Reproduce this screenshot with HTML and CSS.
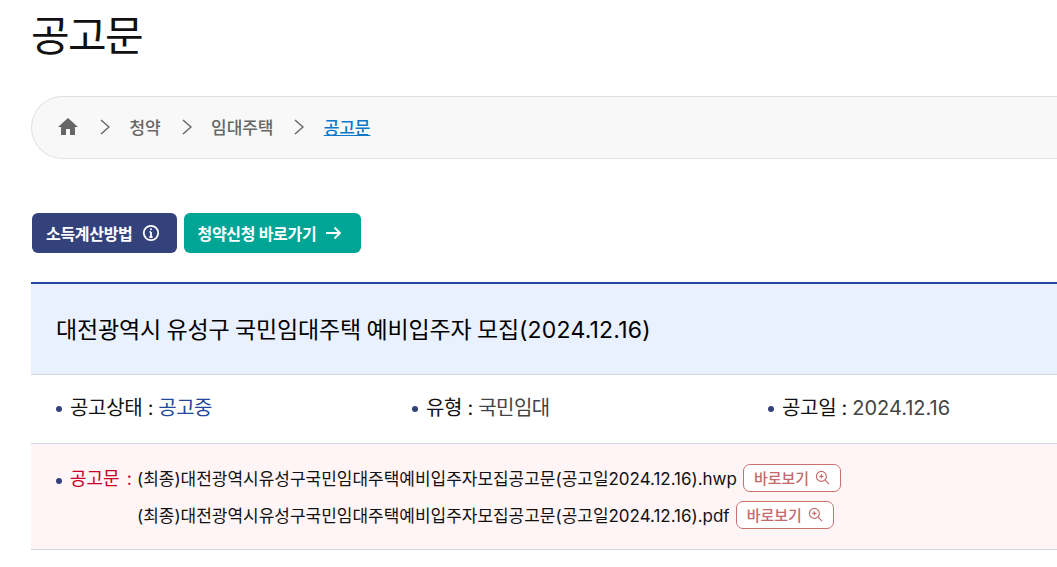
FILE: index.html
```html
<!DOCTYPE html>
<html lang="ko">
<head>
    <meta charset="UTF-8">
    <meta name="viewport" content="width=device-width, initial-scale=1.0">
    <title>공고문</title>
    <link rel="stylesheet" href="styles.css">
</head>
<body>
    <h1 class="page-title">공고문</h1>

    <nav class="breadcrumb">
        <svg class="home-icon" viewBox="0 0 24 24" width="24" height="24"><path d="M10 20v-6h4v6h5v-8h3L12 3 2 12h3v8z"/></svg>
        <svg class="crumb-sep" viewBox="0 0 10 16" width="10" height="16"><path d="M1 1l8 7-8 7"/></svg>
        <span class="crumb">청약</span>
        <svg class="crumb-sep" viewBox="0 0 10 16" width="10" height="16"><path d="M1 1l8 7-8 7"/></svg>
        <span class="crumb">임대주택</span>
        <svg class="crumb-sep" viewBox="0 0 10 16" width="10" height="16"><path d="M1 1l8 7-8 7"/></svg>
        <a class="crumb current" href="#">공고문</a>
    </nav>

    <div class="actions">
        <a class="btn btn-navy" href="#">소득계산방법
            <svg viewBox="0 0 18 18" width="18" height="18"><circle cx="9" cy="9" r="7.2"/><path d="M9 8v5M7.4 13h3.2M7.6 8H9"/><circle class="dot" cx="9" cy="5.3" r="1"/></svg>
        </a>
        <a class="btn btn-teal" href="#">청약신청 바로가기
            <svg viewBox="0 0 18 18" width="18" height="18"><path d="M1 9h14.500M9.500 3.500L15 9l-5.500 5.500"/></svg>
        </a>
    </div>

    <section class="notice">
        <h2 class="notice-title"><span>대전광역시 유성구 국민임대주택 예비입주자 모집<span class="title-date">(2024.12.16)</span></span></h2>
        <ul class="info-row">
            <li class="info-item"><span class="label">공고상태 :</span> <span class="status">공고중</span></li>
            <li class="info-item"><span class="label">유형 :</span> 국민임대</li>
            <li class="info-item"><span class="label">공고일 :</span> <span class="date">2024.12.16</span></li>
        </ul>
        <div class="files">
            <span class="files-label">공고문 :</span>
            <div class="file-list">
                <div class="file">(최종)대전광역시유성구국민임대주택예비입주자모집공고문(공고일2024.12.16).hwp
                    <a class="view-btn" href="#">바로보기
                        <svg viewBox="0 0 16 16" width="15" height="15"><circle cx="6.800" cy="6.800" r="5.300"/><path d="M10.700 10.700L15 15M4.500 6.800h4.600M6.800 4.500v4.600"/></svg>
                    </a>
                </div>
                <div class="file">(최종)대전광역시유성구국민임대주택예비입주자모집공고문(공고일2024.12.16).pdf
                    <a class="view-btn" href="#">바로보기
                        <svg viewBox="0 0 16 16" width="15" height="15"><circle cx="6.800" cy="6.800" r="5.300"/><path d="M10.700 10.700L15 15M4.500 6.800h4.600M6.800 4.500v4.600"/></svg>
                    </a>
                </div>
            </div>
        </div>
    </section>
</body>
</html>
```

FILE: styles.css
```css
* {
    box-sizing: border-box;
}
html, body {
    overflow: hidden;
}
body {
    margin: 0;
    padding-left: 31px;
    height: 567px;
    background-color: #ffffff;
    color: #111111;
    font-family: Inter, 'Noto Sans CJK KR', sans-serif;
}
.page-title {
    margin: 8px 0 0;
    font-size: 42px;
    line-height: 56px;
    font-weight: 400;
    letter-spacing: -1.7px;
}
.breadcrumb {
    display: flex;
    align-items: center;
    height: 63px;
    margin-top: 32px;
    padding: 0 0 2px 24px;
    background-color: #f8f8f8;
    border: 1px solid #e0e0e0;
    border-right: none;
    border-radius: 32px 0 0 32px;
}
.home-icon {
    margin-right: -1px;
    fill: #666666;
}
.crumb-sep {
    margin: 0 19.5px 0 21px;
    fill: none;
    stroke: #666666;
    stroke-width: 1.5;
}
.crumb {
    font-size: 17px;
    font-weight: 500;
    letter-spacing: -0.1px;
    color: #666666;
    text-decoration: none;
}
.crumb.current {
    color: #0b78c9;
    text-decoration: underline;
}
.actions {
    display: flex;
    gap: 7px;
    margin: 54px 0 29px 1px;
}
.btn {
    display: flex;
    align-items: center;
    gap: 9px;
    height: 40px;
    padding: 0 17px 0 14px;
    border-radius: 6px;
    color: #ffffff;
    font-size: 16px;
    font-weight: 700;
    letter-spacing: -0.3px;
    text-decoration: none;
}
.btn svg {
    fill: none;
    stroke: #ffffff;
    stroke-width: 1.8;
}
.btn svg .dot {
    fill: #ffffff;
    stroke: none;
}
.btn-navy {
    background-color: #34427c;
}
.btn-teal {
    padding-right: 18px;
    background-color: #00a596;
}
.notice {
    border-top: 2px solid #23479c;
}
.notice-title {
    display: flex;
    align-items: center;
    height: 91px;
    margin: 0;
    padding: 0 0 2px 25px;
    background-color: #e9f0fe;
    font-size: 23px;
    font-weight: 400;
    letter-spacing: -0.13px;
    word-spacing: -1px;
    color: #000000;
    border-bottom: 1px solid #ced6e4;
}
.title-date {
    letter-spacing: 0.2px;
}
.info-row {
    display: grid;
    grid-template-columns: 356px 356px 1fr;
    align-items: center;
    height: 69px;
    margin: 0;
    padding: 0 0 5px 25px;
    list-style: none;
    border-bottom: 1px solid #ced6e4;
    font-size: 20px;
    letter-spacing: -0.5px;
    color: #444444;
}
.info-item, .files-label {
    position: relative;
    padding-left: 14px;
}
.info-item::before, .files-label::before {
    content: "";
    position: absolute;
    left: 0;
    top: 50%;
    width: 6px;
    height: 6px;
    margin-top: -1px;
    border-radius: 50%;
    background-color: #34427c;
}
.label {
    letter-spacing: -0.3px;
    color: #111111;
}
.status {
    color: #23479c;
}
.date {
    letter-spacing: 0;
}
.files {
    display: flex;
    align-items: flex-start;
    height: 106px;
    padding: 19px 0 0 25px;
    background-color: #fff5f6;
    border-bottom: 1px solid #ced6e4;
}
.files-label {
    width: 81px;
    line-height: 32px;
    font-size: 18px;
    word-spacing: 2px;
    color: #c4002b;
}
.file-list {
    display: flex;
    flex-direction: column;
    gap: 8px;
}
.file {
    display: flex;
    align-items: center;
    gap: 6px;
    height: 29px;
    font-size: 17px;
    letter-spacing: -0.02px;
    color: #111111;
}
.view-btn {
    display: flex;
    align-items: center;
    gap: 6px;
    height: 28px;
    padding: 0 10px;
    background-color: #ffffff;
    border: 1px solid #cb6f6f;
    border-radius: 7px;
    color: #c56a6a;
    font-size: 15px;
    font-weight: 500;
    letter-spacing: 0;
    text-decoration: none;
}
.view-btn svg {
    fill: none;
    stroke: #c56a6a;
    stroke-width: 1.2;
}
```
